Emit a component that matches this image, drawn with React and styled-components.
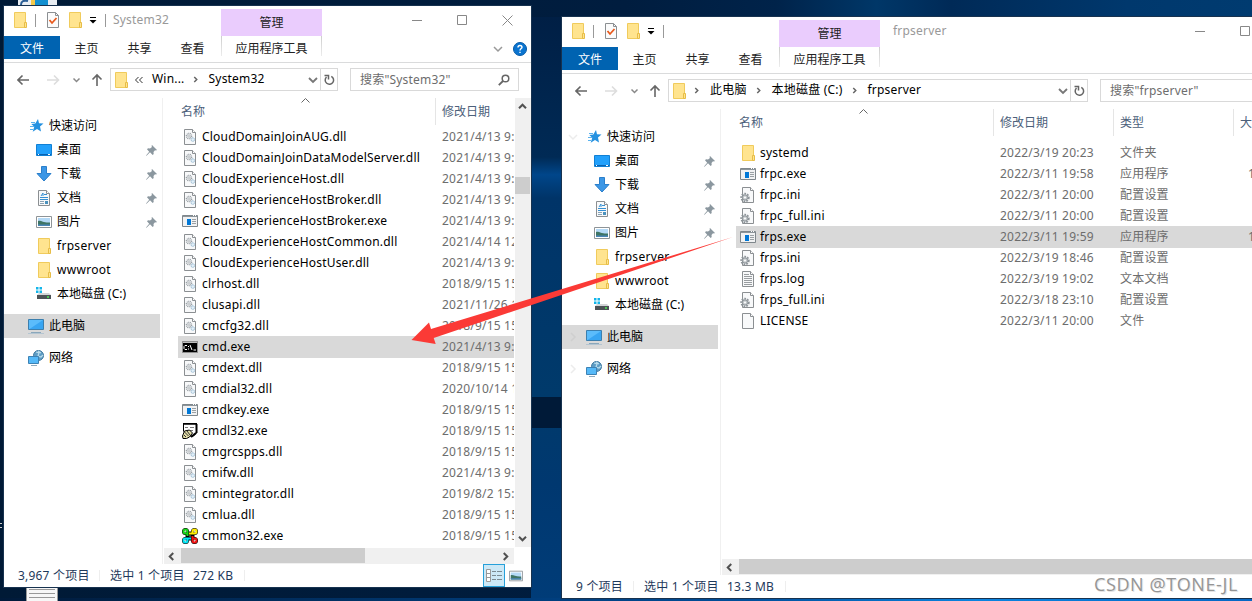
import React from 'react';
import styled, { createGlobalStyle, css } from 'styled-components';

const GlobalStyle = createGlobalStyle`
	* {
		box-sizing: border-box;
	}

	body {
		margin: 0;
		overflow: hidden;
	}
`;

const Desktop = styled.main`
	position: relative;
	width: 1252px;
	height: 601px;
	overflow: hidden;
	font-family: 'Noto Sans', 'Noto Sans CJK SC', sans-serif;
	font-size: 12px;
	line-height: 20px;
	white-space: nowrap;
	color: #000;
	background:
		linear-gradient(90deg, #001a3a, #003f7f 45%, #004f9c 60%, #0a84e0 78%, #0667c4) 0 598px / 100% 3px no-repeat,
		linear-gradient(#001a38, #001a38) 531px 397px / 31px 31px no-repeat,
		linear-gradient(180deg, #001f45 0, #002a55 24%, #00468a 27%, #003468 31%, #003a6b 65%, #003870 80%, #003c78) 531px 17px / 31px 584px no-repeat,
		linear-gradient(90deg, #001a36, #001d3f 50%, #00234a 62%, #003768 70%, #002a57 76%, #00386d 90%, #003b70);
`;

const Window = styled.section`
	position: absolute;
	left: ${({ $x }) => $x}px;
	top: ${({ $y }) => $y}px;
	width: ${({ $w }) => $w}px;
	height: 581px;
	display: flex;
	flex-direction: column;
	background: #fff;
	box-shadow: 0 0 0 1px #17324f;
`;

const TitleBar = styled.header`
	display: flex;
	height: 30px;
`;

const QuickTools = styled.div`
	display: flex;
	align-items: center;
	width: 217px;
	padding: 0 0 2px 8px;
`;

const ToolLine = styled.i`
	width: 1px;
	height: 13px;
	margin-left: ${({ $gap }) => $gap}px;
	background: #999;
`;

const ToolIcon = styled.span`
	display: flex;
	margin-left: ${({ $gap }) => $gap || 0}px;
`;

const WindowTitle = styled.span`
	margin-left: ${({ $gap }) => $gap}px;
	color: #999;
	letter-spacing: 0.2px;
`;

const ContextTitle = styled.div`
	width: 101px;
	margin-top: 3px;
	background: #eaccfd;
	text-align: center;
	line-height: 27px;
	color: #222;
`;

const TitleRest = styled.div`
	flex: 1;
	display: flex;
	align-items: center;
	padding-bottom: 2px;
`;

const Controls = styled.div`
	display: flex;
	gap: 34px;
	margin-left: auto;
	padding-right: 18px;
`;

const Ribbon = styled.nav`
	display: flex;
	height: 27px;
	border-bottom: 1px solid #dadbdc;
	line-height: 25px;
	color: #222;
`;

const FileTab = styled.span`
	width: 56px;
	height: 23px;
	background: #0063b1;
	color: #fff;
	text-align: center;
`;

const Tab = styled.span`
	width: 53px;
	text-align: center;
`;

const ContextTab = styled.span`
	width: 101px;
	height: 20px;
	margin-left: 2px;
	text-align: center;
	border: solid;
	border-width: 0 1px;
	border-image: linear-gradient(#ccc, #eee) 1;
`;

const RibbonEnd = styled.div`
	flex: 1;
	display: flex;
	justify-content: flex-end;
	align-items: center;
	gap: 10px;
	padding: 0 4px 0 0;
`;

const NavBar = styled.div`
	display: flex;
	height: 35px;
	padding: 5px 12px 0 13px;
`;

const NavArrows = styled.div`
	width: 93px;
	height: 23px;
`;

const FieldBox = styled.div`
	display: flex;
	align-items: center;
	height: 23px;
	border: 1px solid #d9d9d9;
	letter-spacing: 0.2px;
`;

const AddressBox = styled(FieldBox)`
	width: ${({ $w }) => $w}px;
	padding-left: 2px;
`;

const Crumb = styled.span`
	margin-left: ${({ $gap }) => $gap}px;
	margin-bottom: 1px;
`;

const CrumbArrow = styled.span`
	display: flex;
	margin-left: ${({ $gap }) => $gap}px;
`;

const AddressEnd = styled.div`
	display: flex;
	align-items: center;
	height: 100%;
	margin-left: auto;
`;

const Refresh = styled.div`
	display: flex;
	align-items: center;
	justify-content: center;
	width: 17px;
	height: 100%;
	margin-left: 2px;
	border-left: 1px solid #d9d9d9;
`;

const SearchBox = styled(FieldBox)`
	flex: 1;
	margin-left: 12px;
	padding: 0 8px 0 9px;
	justify-content: space-between;
	color: #6d6d6d;
`;

const Body = styled.div`
	display: flex;
	height: 466px;
`;

const Sidebar = styled.aside`
	width: 159px;
	padding-top: 16px;
	border-right: 1px solid #f0f0f0;
`;

const SideItem = styled.div`
	display: flex;
	align-items: center;
	width: 156px;
	height: 24px;
	margin-top: ${({ $section }) => ($section ? 8 : 0)}px;
	padding: 0 3px 0 0;
	background: ${({ $selected }) => ($selected ? '#d9d9d9' : 'transparent')};
`;

const Indent = styled.span`
	display: flex;
	width: ${({ $level }) => ($level ? 32 : 24)}px;
	padding-left: 6px;
`;

const SideText = styled.span`
	flex: 1;
	margin-left: 5px;
	letter-spacing: ${({ $latin }) => ($latin ? 0.3 : 0)}px;
	line-height: 24px;
`;

const Main = styled.div`
	flex: 1;
	min-width: 0;
	display: flex;
	flex-direction: column;
	padding-left: 1px;
`;

const ListArea = styled.div`
	flex: 1;
	display: flex;
	min-height: 0;
`;

const List = styled.div`
	flex: 1;
	min-width: 0;
	overflow: hidden;
	padding-left: 14px;
`;

const columns = css`
	display: grid;
	grid-template-columns: 258px 120px 120px 120px;
`;

const ListHead = styled.div`
	${columns}
	height: 27px;
	margin-bottom: ${({ $gap }) => $gap}px;
	line-height: 27px;
	color: #4c607a;
`;

const HeadCell = styled.div`
	padding-left: ${({ $first }) => ($first ? 3 : 6)}px;
	border-right: 1px solid #e5e5e5;
`;

const SortCell = styled(HeadCell)`
	display: flex;
`;

const SortMark = styled.span`
	display: flex;
	margin-left: 96px;
`;

const Row = styled.div`
	${columns}
	height: 21px;
	line-height: 21px;
	background: ${({ $selected }) => ($selected ? '#d9d9d9' : 'transparent')};
	box-shadow: ${({ $selected }) => ($selected ? '0 1px #d9d9d9' : 'none')};
	letter-spacing: 0.2px;
`;

const NameCell = styled.div`
	display: flex;
	align-items: center;
	gap: 4px;
	padding-left: 4px;
`;

const Cell = styled.div`
	padding-left: 6px;
	color: #6d6d6d;
`;

const SizeCell = styled(Cell)`
	padding-left: 14px;
`;

const VScroll = styled.div`
	display: flex;
	flex-direction: column;
	align-items: center;
	justify-content: space-between;
	width: 16px;
	height: 449px;
	margin-left: 1px;
	padding: 4px 1px 4px 0;
	background: #f0f0f0;
`;

const VThumb = styled.i`
	width: 15px;
	height: 17px;
	margin: 66px 0 auto;
	background: #cdcdcd;
`;

const HScroll = styled.div`
	display: flex;
	align-items: center;
	height: 16px;
	margin-right: ${({ $inset }) => $inset}px;
	padding: 0 4px 0 3px;
	background: #f0f0f0;
`;

const HThumb = styled.i`
	width: ${({ $w }) => $w}px;
	height: 15px;
	margin: 0 auto 1px 5px;
	background: #cdcdcd;
`;

const StatusBar = styled.footer`
	display: flex;
	align-items: center;
	height: 23px;
	padding-left: 14px;
	color: #1e395b;
	letter-spacing: 0.2px;
`;

const StatusText = styled.span`
	width: ${({ $w }) => $w}px;
	flex: none;
`;

const StatusLine = styled.i`
	width: 1px;
	height: 11px;
	margin-right: 10px;
	background: #eee;
`;

const ViewButtons = styled.div`
	display: flex;
	align-items: center;
	gap: 4px;
	height: 23px;
	margin-left: auto;
	padding-right: 8px;
`;

const ViewActive = styled.span`
	display: flex;
	align-items: center;
	justify-content: center;
	width: 22px;
	height: 23px;
	border: 1px solid #26a0da;
	background: #cce8f6;
`;

const Overlay = styled.svg`
	position: absolute;
	left: 0;
	top: 0;
	pointer-events: none;
`;

const Watermark = styled.div`
	position: absolute;
	left: 1094px;
	top: 572px;
	font-family: 'Open Sans', 'Noto Sans', sans-serif;
	font-size: 18px;
	letter-spacing: 0.6px;
	line-height: 24px;
	color: #959595;
	text-shadow: 1px 1px #e4e4e4;
`;

const Svg = ({ w = 16, h = 16, children }) => (
	<svg width={w} height={h} viewBox={`0 0 ${w} ${h}`} fill="none">
		{children}
	</svg>
);

const Page = () => (
	<>
		<path d="M2.5.5h8l3 3v12h-11z" fill="#f8f9fa" stroke="#8b8f92" />
		<path d="M10.5.5v3h3" fill="#fff" stroke="#8b8f92" />
	</>
);

const FolderIcon = () => (
	<Svg>
		<path d="M2.5.5h11v15h-11z" fill="#ffe48f" stroke="#f0cb5c" />
		<path d="M12.5 10.5h2v5h-2z" fill="#ffe48f" stroke="#e7bd47" />
	</Svg>
);

const DllIcon = () => (
	<Svg>
		<Page />
		<circle cx="7" cy="7" r="2.6" stroke="#9aa1a6" strokeWidth="1.4" strokeDasharray="1 .6" />
		<circle cx="7" cy="7" r="1.2" stroke="#b4babe" />
		<circle cx="10.8" cy="10.6" r="1.8" fill="#e1eef7" stroke="#8fb4cd" strokeDasharray="1.2 .5" />
	</Svg>
);

const IniIcon = () => (
	<Svg>
		<Page />
		<circle cx="5" cy="10.5" r="3.8" stroke="#8c9398" strokeWidth="1.8" strokeDasharray="1.7 1.1" />
		<circle cx="5" cy="10.5" r="2.7" fill="#c3c8cb" stroke="#8c9398" />
		<circle cx="5" cy="10.5" r="1" fill="#fff" />
	</Svg>
);

const LogIcon = () => (
	<Svg>
		<Page />
		<path d="M4 3.5h5M4 5.5h8M4 7.5h8M4 9.5h8M4 11.5h8M4 13.5h8" stroke="#999da0" />
	</Svg>
);

const FileIcon = () => (
	<Svg>
		<Page />
	</Svg>
);

const ExeIcon = () => (
	<Svg>
		<path d="M.5 2.5h15v11H.5z" fill="#f1f2f3" stroke="#7f878c" />
		<path d="M1 3h14v1H1z" fill="#8d959a" />
		<path d="M11 2.5h1M13 2.5h1" stroke="#fff" />
		<path d="M5 6h4v6H5z" fill="#0078d7" />
		<path d="M10 6.5h4M10 8.5h4M10 10.5h4" stroke="#9aa0a4" />
	</Svg>
);

const CmdIcon = () => (
	<Svg>
		<path d="M.5 2.5h15v11H.5z" fill="#000" stroke="#8f8f8f" />
		<path d="M1 3h14v1H1z" fill="#bdbdbd" />
		<path d="M5 6.5H3l-1 1v2l1 1h2M6.5 7v1M6.5 9.500v1M8 6l2 5M11.500 11H14" stroke="#fff" />
	</Svg>
);

const DialIcon = () => (
	<Svg>
		<path d="M1.500 1h13v9l-3 3H6L1.500 8z" fill="#fff" stroke="#000" />
		<path d="M1 .5h14M14.500 1v9" stroke="#000" strokeWidth="2" />
		<path d="M3 4.500h3M8 4.500h4M7 7.500h4" stroke="#777" />
		<path d="M.5 13l2-5 5-1 3 3-3 4-3 1.500H1z" fill="#e2dda6" stroke="#000" />
		<path d="M2.500 9l4 4M5 8l3 4M2 12l2 2" stroke="#333" />
		<path d="M9 14l5-4" stroke="#000" strokeWidth="2" />
	</Svg>
);

const KnotIcon = () => (
	<Svg>
		<path d="M5.500 10.500V5.500h5v5z" stroke="#000" strokeWidth="4" />
		<g stroke="#000" strokeWidth="5">
			<circle cx="3.500" cy="3.500" r="1" />
			<circle cx="12.500" cy="3.500" r="1" />
			<circle cx="3.500" cy="12.500" r="1" />
			<circle cx="12.500" cy="12.500" r="1" />
		</g>
		<g strokeWidth="2">
			<path d="M5.500 8V3.500a2 2 0 1 0-2 2H5" stroke="#18d818" />
			<path d="M7 5.500h5.500a2 2 0 1 0-2-2V5" stroke="#ffeb00" />
			<path d="M9 10.500H3.500a2 2 0 1 0 2 2V11" stroke="#00e5f5" />
			<path d="M10.500 8v4.500a2 2 0 1 0 2-2H11" stroke="#f31313" />
		</g>
	</Svg>
);

const StarIcon = () => (
	<Svg>
		<path d="M10 1l1 4.200 4.500.3-3.500 3 1 5-4-2.600-4.300 2.900L6.300 8.800 3.300 6l4-.6z" fill="#2491e0" />
		<path d="M3 4.500h4M2 8.500h4M2 11.500h3" stroke="#58b2ee" />
	</Svg>
);

const DesktopIcon = () => (
	<Svg>
		<path d="M.5 2.500h15v11H.5z" fill="#22a0fb" stroke="#1180d4" />
		<path d="M1 12.500h14" stroke="#0a62b0" />
		<path d="M2 12.500h1M12 12.500h2" stroke="#fff" />
	</Svg>
);

const DownloadIcon = () => (
	<Svg>
		<path d="M5.500.5h5v7h4.500L8 15 1 7.500h4.500z" fill="#3c97e6" stroke="#2b7fcb" />
	</Svg>
);

const DocIcon = () => (
	<Svg>
		<Page />
		<path d="M5 6l2-3v3M8 4.500h3M4 7.500h8M4 9.500h8" stroke="#3690d3" />
		<path d="M4 11.500h4M4 13.500h4" stroke="#8ba3b5" />
		<path d="M9 11h3v3H9z" fill="#4b92bd" />
	</Svg>
);

const PictureIcon = ({ w = 16 }) => (
	<svg width={w} height={w} viewBox="0 0 16 16" fill="none">
		<path d="M.5 2.500h15v11H.5z" fill="#fff" stroke="#8e9498" />
		<path d="M2 4h12v8H2z" fill="#b4d9f6" />
		<path d="M2 7c3-1 5 2 12 1.500V12H2z" fill="#3f7566" />
		<path d="M2 10.500h12V12H2z" fill="#4a86b8" />
	</svg>
);

const DriveIcon = () => (
	<Svg>
		<path d="M0 1h2.500v2.500H0zM3.500 1H6v2.500H3.500zM0 4.500h2.500V7H0zM3.500 4.500H6V7H3.500z" fill="#12b5ea" />
		<path d="M3 7h10l2 2H1z" fill="#d3d5d7" />
		<path d="M1 9h14v4H1z" fill="#4c5256" />
		<path d="M11 11h2" stroke="#4bea54" strokeWidth="1.500" />
	</Svg>
);

const ComputerIcon = () => (
	<Svg>
		<path d="M.5 1.500h15v10H.5z" fill="#5bbcfb" stroke="#3c7fae" />
		<path d="M1.500 11L15 2v9z" fill="#38a5f2" />
		<path d="M3 14.500h10" stroke="#8aa7bb" />
		<path d="M0 15.500h16" stroke="#b4c5d1" />
	</Svg>
);

const NetworkIcon = () => (
	<Svg>
		<circle cx="10.500" cy="5.500" r="5" fill="#5d9cc4" stroke="#40799f" />
		<path d="M8 2l3 1-1 3 3 1 2-2M10 1l3 2" stroke="#b9dcec" strokeWidth="1.300" />
		<path d="M.5 6.500h10v7H.5z" fill="#55b9f8" stroke="#3d82b4" />
		<path d="M3 15.500h6" stroke="#8faabd" />
	</Svg>
);

const PinIcon = () => (
	<Svg w={11} h={11}>
		<path d="M6 0l5 5-1 .5-1-.2L7.500 7l.2 2-1 1L4 7.300.5 10.700 0 10.500 3.200 6.700 1 4.300l1-1 2 .2L6 2 5.500 1z" fill="#8b979f" />
	</Svg>
);

const CheckDocIcon = () => (
	<Svg w={12}>
		<path d="M.5.5h8l3 3v12H.5z" fill="#fbfbfb" stroke="#8b8f92" />
		<path d="M8.500.5v3h3" stroke="#8b8f92" />
		<path d="M2.500 8l2.500 3 4.500-5" stroke="#e8591c" strokeWidth="1.800" />
	</Svg>
);

const Chevron = ({ dir = 'right', color = '#666', size = 4, stroke = 1.5 }) => {
	const turn = { right: 0, down: 90, left: 180, up: 270 }[dir];
	const c = size + 1;
	return (
		<Svg w={c * 2} h={c * 2}>
			<path
				d={`M${c - size / 2} ${c - size}l${size} ${size}l${-size} ${size}`}
				transform={`rotate(${turn} ${c} ${c})`}
				stroke={color}
				strokeWidth={stroke}
			/>
		</Svg>
	);
};

const icons = {
	folder: FolderIcon,
	dll: DllIcon,
	ini: IniIcon,
	log: LogIcon,
	file: FileIcon,
	exe: ExeIcon,
	cmd: CmdIcon,
	dial: DialIcon,
	knot: KnotIcon,
	star: StarIcon,
	desktop: DesktopIcon,
	download: DownloadIcon,
	doc: DocIcon,
	picture: PictureIcon,
	drive: DriveIcon,
	computer: ComputerIcon,
	network: NetworkIcon,
};

const places = [
	{ icon: 'star', text: '快速访问', open: true },
	{ icon: 'desktop', text: '桌面', level: 1, pin: true },
	{ icon: 'download', text: '下载', level: 1, pin: true },
	{ icon: 'doc', text: '文档', level: 1, pin: true },
	{ icon: 'picture', text: '图片', level: 1, pin: true },
	{ icon: 'folder', text: 'frpserver', level: 1, latin: true },
	{ icon: 'folder', text: 'wwwroot', level: 1, latin: true },
	{ icon: 'drive', text: '本地磁盘 (C:)', level: 1 },
	{ icon: 'computer', text: '此电脑', section: true, selected: true },
	{ icon: 'network', text: '网络', section: true },
];

const systemFiles = [
	['dll', 'CloudDomainJoinAUG.dll', '2021/4/13 9:41'],
	['dll', 'CloudDomainJoinDataModelServer.dll', '2021/4/13 9:41'],
	['dll', 'CloudExperienceHost.dll', '2021/4/13 9:41'],
	['dll', 'CloudExperienceHostBroker.dll', '2021/4/13 9:41'],
	['exe', 'CloudExperienceHostBroker.exe', '2021/4/13 9:41'],
	['dll', 'CloudExperienceHostCommon.dll', '2021/4/14 12:10'],
	['dll', 'CloudExperienceHostUser.dll', '2021/4/13 9:41'],
	['dll', 'clrhost.dll', '2018/9/15 15:12'],
	['dll', 'clusapi.dll', '2021/11/26 10:20'],
	['dll', 'cmcfg32.dll', '2018/9/15 15:12'],
	['cmd', 'cmd.exe', '2021/4/13 9:41'],
	['dll', 'cmdext.dll', '2018/9/15 15:12'],
	['dll', 'cmdial32.dll', '2020/10/14 10:20'],
	['exe', 'cmdkey.exe', '2018/9/15 15:12'],
	['dial', 'cmdl32.exe', '2018/9/15 15:12'],
	['dll', 'cmgrcspps.dll', '2018/9/15 15:12'],
	['dll', 'cmifw.dll', '2021/4/13 9:41'],
	['dll', 'cmintegrator.dll', '2019/8/2 15:12'],
	['dll', 'cmlua.dll', '2018/9/15 15:12'],
	['knot', 'cmmon32.exe', '2018/9/15 15:12'],
];

const frpFiles = [
	['folder', 'systemd', '2022/3/19 20:23', '文件夹'],
	['exe', 'frpc.exe', '2022/3/11 19:58', '应用程序', '1'],
	['ini', 'frpc.ini', '2022/3/11 20:00', '配置设置'],
	['ini', 'frpc_full.ini', '2022/3/11 20:00', '配置设置'],
	['exe', 'frps.exe', '2022/3/11 19:59', '应用程序', '1'],
	['ini', 'frps.ini', '2022/3/19 18:46', '配置设置'],
	['log', 'frps.log', '2022/3/19 19:02', '文本文档'],
	['ini', 'frps_full.ini', '2022/3/18 23:10', '配置设置'],
	['file', 'LICENSE', '2022/3/11 20:00', '文件'],
];

function Title({ name, wide }) {
	return (
		<TitleBar>
			<QuickTools>
				<FolderIcon />
				<ToolLine $gap={7} />
				<ToolIcon $gap={11}>
					<CheckDocIcon />
				</ToolIcon>
				<ToolIcon $gap={8}>
					<FolderIcon />
				</ToolIcon>
				<ToolIcon $gap={6}>
					<Svg w={8} h={8}>
						<path d="M1 1.500h6" stroke="#000" />
						<path d="M.5 4h7L4 7.500z" fill="#000" />
					</Svg>
				</ToolIcon>
				<ToolLine $gap={8} />
				{!wide && <WindowTitle $gap={7}>{name}</WindowTitle>}
			</QuickTools>
			<ContextTitle>管理</ContextTitle>
			<TitleRest>
				{wide && <WindowTitle $gap={13}>{name}</WindowTitle>}
				<Controls>
					<Svg w={11} h={11}>
						<path d="M0 5.500h10" stroke="#888" />
					</Svg>
					<Svg w={11} h={11}>
						<path d="M.5.5h9v9h-9z" stroke="#888" />
					</Svg>
					<Svg w={11} h={11}>
						<path d="M.5.5l10 10M10.500.5l-10 10" stroke="#888" />
					</Svg>
				</Controls>
			</TitleRest>
		</TitleBar>
	);
}

function Tabs() {
	return (
		<Ribbon>
			<FileTab>文件</FileTab>
			<Tab>主页</Tab>
			<Tab>共享</Tab>
			<Tab>查看</Tab>
			<ContextTab>应用程序工具</ContextTab>
			<RibbonEnd>
				<Chevron dir="down" color="#999" />
				<Svg w={14} h={14}>
					<circle cx="7" cy="7" r="6.500" fill="#0a74d0" stroke="#065aa6" />
					<path d="M5 5.500Q5 3.500 7 3.500T9 5.300C9 6.500 7 6.700 7 8.500M7 9.700v1.300" stroke="#fff" strokeWidth="1.400" />
				</Svg>
			</RibbonEnd>
		</Ribbon>
	);
}

function Navigation({ path, width, search }) {
	return (
		<NavBar>
			<NavArrows>
				<Svg w={88} h={23}>
					<path d="M12 12H1M5.500 7.500L1 12l4.500 4.500" stroke="#666" strokeWidth="1.600" />
					<path d="M30 12h11.500M37 7.500l4.500 4.500-4.500 4.500" stroke="#ddd" strokeWidth="1.600" />
					<path d="M56.500 10.500l3 3 3-3" stroke="#888" strokeWidth="1.500" />
					<path d="M80 18V7M75.500 11.500L80 7l4.500 4.500" stroke="#666" strokeWidth="1.600" />
				</Svg>
			</NavArrows>
			<AddressBox $w={width}>
				<FolderIcon />
				{path.map(({ text, gap, mark }) => (
					<React.Fragment key={text}>
						<CrumbArrow $gap={gap}>
							{mark === '«' ? (
								<Svg w={10} h={10}>
									<path d="M4.500 2L1.500 5l3 3M8.500 2l-3 3 3 3" stroke="#333" />
								</Svg>
							) : (
								<Chevron size={2.5} />
							)}
						</CrumbArrow>
						<Crumb $gap={mark ? 8 : 10}>{text}</Crumb>
					</React.Fragment>
				))}
				<AddressEnd>
					<Chevron dir="down" color="#777" stroke={1.8} />
					<Refresh>
						<Svg w={12} h={14}>
							<path d="M8.300 3.300A4.200 4.200 0 1 1 3.500 4M1.500 2.500h4v4" stroke="#666" strokeWidth="1.500" />
						</Svg>
					</Refresh>
				</AddressEnd>
			</AddressBox>
			<SearchBox>
				<span>{search}</span>
				<Svg w={12} h={12}>
					<circle cx="7.500" cy="4.500" r="3.300" stroke="#666" strokeWidth="1.500" />
					<path d="M5 7L.8 11.200" stroke="#666" strokeWidth="1.800" />
				</Svg>
			</SearchBox>
		</NavBar>
	);
}

function Places({ arrows }) {
	return (
		<Sidebar>
			{places.map(({ icon, text, level, pin, section, selected, latin, open }) => {
				const Icon = icons[icon];
				return (
					<SideItem key={text} $section={section} $selected={selected}>
						<Indent $level={level}>
							{arrows && !level && (
								<Chevron
									dir={open ? 'down' : 'right'}
									color={selected ? '#cfcfcf' : '#ececec'}
								/>
							)}
						</Indent>
						<Icon />
						<SideText $latin={latin}>{text}</SideText>
						{pin && <PinIcon />}
					</SideItem>
				);
			})}
		</Sidebar>
	);
}

function FileList({ files, selected, gap }) {
	return (
		<List>
			<ListHead $gap={gap}>
				<SortCell $first>
					名称
					<SortMark>
						<Svg w={9} h={5}>
							<path d="M.5 4.500l4-4 4 4" stroke="#666" />
						</Svg>
					</SortMark>
				</SortCell>
				<HeadCell>修改日期</HeadCell>
				<HeadCell>类型</HeadCell>
				<HeadCell>大小</HeadCell>
			</ListHead>
			{files.map(([icon, name, date, type, size]) => {
				const Icon = icons[icon];
				return (
					<Row key={name} $selected={name === selected}>
						<NameCell>
							<Icon />
							{name}
						</NameCell>
						<Cell>{date}</Cell>
						<Cell>{type}</Cell>
						<SizeCell>{size}</SizeCell>
					</Row>
				);
			})}
		</List>
	);
}

function SystemWindow() {
	return (
		<Window $x={4} $y={6} $w={527}>
			<Title name="System32" />
			<Tabs />
			<Navigation
				width={228}
				search={'搜索"System32"'}
				path={[
					{ text: 'Win...', gap: 5, mark: '«' },
					{ text: 'System32', gap: 7 },
				]}
			/>
			<Body>
				<Places />
				<Main>
					<ListArea>
						<FileList files={systemFiles} selected="cmd.exe" gap={1} />
						<VScroll>
							<Chevron dir="up" color="#505050" stroke={2} size={3.5} />
							<VThumb />
							<Chevron dir="down" color="#505050" stroke={2} size={3.5} />
						</VScroll>
					</ListArea>
					<HScroll $inset={17}>
						<Chevron dir="left" color="#505050" stroke={2} size={3.5} />
						<HThumb $w={184} />
						<Chevron color="#505050" stroke={2} size={3.5} />
					</HScroll>
				</Main>
			</Body>
			<StatusBar>
				<StatusText $w={81}>3,967 个项目</StatusText>
				<StatusLine />
				<StatusText $w={83}>选中 1 个项目</StatusText>
				<StatusText $w={51}>272 KB</StatusText>
				<StatusLine />
				<ViewButtons>
					<ViewActive>
						<Svg w={17} h={13}>
							<path d="M.5.5h4v12h-4zM.5 4.500h4M.5 8.500h4" fill="#fff" stroke="#999" />
							<path d="M6 2.500h4m1 0h5M6 6.500h4m1 0h5M6 10.500h4m1 0h5" stroke="#7b8a92" />
						</Svg>
					</ViewActive>
					<PictureIcon w={14} />
				</ViewButtons>
			</StatusBar>
		</Window>
	);
}

function FrpWindow() {
	return (
		<Window $x={562} $y={17} $w={752}>
			<Title name="frpserver" wide />
			<Tabs />
			<Navigation
				width={420}
				search={'搜索"frpserver"'}
				path={[
					{ text: '此电脑', gap: 6 },
					{ text: '本地磁盘 (C:)', gap: 8 },
					{ text: 'frpserver', gap: 8 },
				]}
			/>
			<Body>
				<Places arrows />
				<Main>
					<ListArea>
						<FileList files={frpFiles} selected="frps.exe" gap={6} />
					</ListArea>
					<HScroll $inset={0}>
						<Chevron dir="left" color="#505050" stroke={2} size={3.5} />
						<HThumb $w={560} />
					</HScroll>
				</Main>
			</Body>
			<StatusBar>
				<StatusText $w={57}>9 个项目</StatusText>
				<StatusLine />
				<StatusText $w={83}>选中 1 个项目</StatusText>
				<StatusText $w={58}>13.3 MB</StatusText>
				<StatusLine />
			</StatusBar>
		</Window>
	);
}

function App() {
	return (
		<>
			<GlobalStyle />
			<Desktop>
				<Overlay width="60" height="601">
					<path d="M18 0h13v6H18zM48 0h9v6h-9z" fill="#e8edf2" />
					<path d="M21 5c0-4 3-5 7-4" stroke="#2a5e96" strokeWidth="2" fill="none" />
					<path d="M31 0h4v6h-4z" fill="#f2c84b" />
					<path d="M35 0h13v6H35z" fill="#128fd0" />
					<path d="M26.500 586h31v16h-31z" fill="#f7f7f7" stroke="#999" />
					<path d="M29 589.500h26M29 593.500h26M29 597.500h26" stroke="#999" />
					<path d="M0 523.500h2M0 527.500h2" stroke="#ccc" />
				</Overlay>
				<SystemWindow />
				<FrpWindow />
				<Overlay width="1252" height="601">
					<path d="M411.500 340L429 322.500 431 329 733 237 433.700 338 435.700 344z" fill="#fb3a36" />
				</Overlay>
				<Watermark>CSDN @TONE-JL</Watermark>
			</Desktop>
		</>
	);
}

export default App;
